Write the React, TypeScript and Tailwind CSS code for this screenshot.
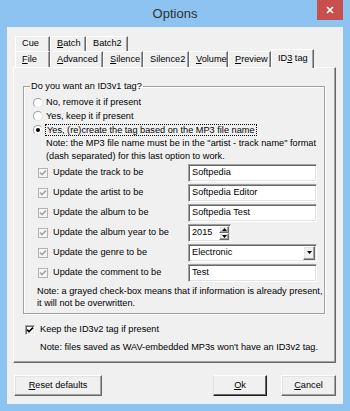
import React from "react";

const sunken =
  "border border-t-[#a0a0a0] border-l-[#a0a0a0] border-b-white border-r-white shadow-[inset_1px_1px_0_#696969,inset_-1px_-1px_0_#e3e3e3]";
const raised =
  "border border-t-white border-l-white border-b-[#696969] border-r-[#696969] shadow-[inset_-1px_-1px_0_#a0a0a0,inset_1px_1px_0_#e3e3e3]";

function Check({ gray }: { gray?: boolean }) {
  return (
    <span
      className={
        gray
          ? "w-[10px] h-[10px] shrink-0 border border-[#b1b1b1] bg-[#f5f5f5] flex items-center justify-center"
          : `w-[10px] h-[10px] shrink-0 bg-white flex items-center justify-center ${sunken}`
      }
    >
      <svg width="8" height="8" viewBox="0 0 8 8">
        <path
          d="M1 3.6 L3 5.6 L7 1.6"
          fill="none"
          stroke={gray ? "#a6a6a6" : "#000"}
          strokeWidth="1.6"
        />
      </svg>
    </span>
  );
}

function Radio({ on }: { on?: boolean }) {
  return (
    <span className="w-[10px] h-[10px] shrink-0 rounded-full bg-white border border-t-[#a0a0a0] border-l-[#a0a0a0] border-b-[#e3e3e3] border-r-[#e3e3e3] flex items-center justify-center">
      {on && <span className="w-[4px] h-[4px] rounded-full bg-black" />}
    </span>
  );
}

function Tab({ className, children }: { className: string; children: React.ReactNode }) {
  return (
    <div
      className={`h-full flex items-center pl-[6px] border-l border-t border-white border-r border-r-[#696969] shadow-[inset_-1px_0_0_#a0a0a0] rounded-tl-[2px] whitespace-nowrap ${className}`}
    >
      {children}
    </div>
  );
}

function Row({ label, children }: { label: string; children: React.ReactNode }) {
  return (
    <div className="h-[18px] flex items-center pl-[14px]">
      <Check gray />
      <span className="ml-[5px] w-[135px] whitespace-nowrap">{label}</span>
      {children}
    </div>
  );
}

function TextBox({ value }: { value: string }) {
  return (
    <div className={`w-[129px] h-[18px] bg-white flex items-center pl-[3px] whitespace-nowrap ${sunken}`}>
      {value}
    </div>
  );
}

function Tri({ down }: { down?: boolean }) {
  return (
    <svg width="5" height="3" viewBox="0 0 5 3">
      <path d={down ? "M0 0 H5 L2.5 3 Z" : "M0 3 H5 L2.5 0 Z"} fill="#000" />
    </svg>
  );
}

export default function App() {
  return (
    <div className="w-[350px] h-[411px] bg-[#8dc3f1] flex flex-col overflow-hidden font-['Liberation_Sans',Arial,sans-serif] text-[9.2px] leading-none text-black">
      {/* title bar */}
      <div className="h-[27px] flex shrink-0">
        <div className="w-[33px]" />
        <div className="flex-1 flex items-center justify-center text-[13px] text-[#303030] pb-[1px]">
          Options
        </div>
        <div className="w-[33px] flex items-start">
          <div className="w-[26px] h-[20px] bg-[#c7504f] flex items-center justify-center">
            <svg width="8" height="8" viewBox="0 0 8 8">
              <path d="M1 1 L7 7 M7 1 L1 7" stroke="#fff" strokeWidth="1.7" />
            </svg>
          </div>
        </div>
      </div>

      {/* client */}
      <div className="mx-[7px] mb-[7px] flex-1 bg-[#f0f0f0] flex flex-col">
        {/* tabs */}
        <div className="pl-[8px] pt-[9px] flex flex-col">
          <div className="h-[15px] flex">
            <Tab className="w-[35px]">Cue</Tab>
            <Tab className="w-[36px]">
              <span><u>B</u>atch</span>
            </Tab>
            <Tab className="w-[42px]">Batch2</Tab>
          </div>
          <div className="h-[16px] flex items-end">
            <Tab className="w-[35px] h-[16px]">
              <span><u>F</u>ile</span>
            </Tab>
            <Tab className="w-[53px] h-[16px]">
              <span><u>A</u>dvanced</span>
            </Tab>
            <Tab className="w-[40px] h-[16px]">
              <span><u>S</u>ilence</span>
            </Tab>
            <Tab className="w-[46px] h-[16px]">Silence2</Tab>
            <Tab className="w-[39px] h-[16px]">
              <span><u>V</u>olume</span>
            </Tab>
            <Tab className="w-[43px] h-[16px]">
              <span><u>P</u>review</span>
            </Tab>
            <div className="w-[43px] h-[19px] -mb-[1px] relative z-10 bg-[#f0f0f0] flex items-start pt-[4px] pl-[6px] border-l border-t border-white border-r border-r-[#696969] shadow-[inset_-1px_0_0_#a0a0a0] rounded-tl-[2px] whitespace-nowrap">
              <span>ID<u>3</u> tag</span>
            </div>
          </div>
        </div>

        {/* panel */}
        <div className="ml-[6px] mr-[7px] h-[296px] border-t border-l border-white border-r border-b border-r-[#696969] border-b-[#696969] shadow-[inset_-1px_-1px_0_#a0a0a0] flex flex-col">
          <fieldset className="mt-[13px] ml-[9px] mr-[10px] border border-[#a0a0a0] shadow-[1px_1px_0_#fff,inset_1px_1px_0_#fff] pt-[4px] pb-[4px] flex flex-col">
            <legend className="ml-[6px] leading-[11px] px-[1px]">Do you want an ID3v1 tag?</legend>
            <div className="h-[13.5px] flex items-center pl-[9px]">
              <Radio />
              <span className="ml-[3px]">No, remove it if present</span>
            </div>
            <div className="h-[13.5px] flex items-center pl-[9px]">
              <Radio />
              <span className="ml-[3px]">Yes, keep it if present</span>
            </div>
            <div className="h-[13.5px] flex items-center pl-[9px]">
              <Radio on />
              <span className="ml-[2px] border border-dotted border-black px-[1px] leading-[10px]">
                Yes, (re)create the tag based on the MP3 file name
              </span>
            </div>
            <div className="pl-[22px] leading-[13px] whitespace-nowrap">
              <div>Note: the MP3 file name must be in the "artist - track name" format</div>
              <div>(dash separated) for this last option to work.</div>
            </div>
            <div className="mt-[1px] flex flex-col gap-[2px]">
              <Row label="Update the track to be">
                <TextBox value="Softpedia" />
              </Row>
              <Row label="Update the artist to be">
                <TextBox value="Softpedia Editor" />
              </Row>
              <Row label="Update the album to be">
                <TextBox value="Softpedia Test" />
              </Row>
              <Row label="Update the album year to be">
                <div className={`w-[43px] h-[18px] bg-white flex items-center ${sunken}`}>
                  <span className="flex-1 pl-[3px]">2015</span>
                  <div className="w-[12px] h-full flex flex-col p-[1px]">
                    <div className={`flex-1 bg-[#f0f0f0] flex items-center justify-center ${raised}`}>
                      <Tri />
                    </div>
                    <div className={`flex-1 bg-[#f0f0f0] flex items-center justify-center ${raised}`}>
                      <Tri down />
                    </div>
                  </div>
                </div>
              </Row>
              <Row label="Update the genre to be">
                <div className={`w-[129px] h-[18px] bg-white flex items-center ${sunken}`}>
                  <span className="flex-1 pl-[3px]">Electronic</span>
                  <div className="w-[14px] h-full p-[1px]">
                    <div className={`h-full bg-[#f0f0f0] flex items-center justify-center ${raised}`}>
                      <Tri down />
                    </div>
                  </div>
                </div>
              </Row>
              <Row label="Update the comment to be">
                <TextBox value="Test" />
              </Row>
            </div>
            <div className="mt-[3px] pl-[13px] leading-[12px] whitespace-nowrap">
              <div>Note: a grayed check-box means that if information is already present,</div>
              <div>it will not be overwritten.</div>
            </div>
          </fieldset>

          <div className="mt-[10px] ml-[11px] h-[12px] flex items-center">
            <Check />
            <span className="ml-[5px]">Keep the ID3v2 tag if present</span>
          </div>
          <div className="mt-[5px] ml-[26px] leading-[12px] whitespace-nowrap">
            Note: files saved as WAV-embedded MP3s won't have an ID3v2 tag.
          </div>
        </div>

        {/* buttons */}
        <div className="mt-[12px] px-[7px] flex items-center">
          <div className={`w-[88px] h-[21px] flex items-center justify-center bg-[#f0f0f0] ${raised}`}>
            <span><u>R</u>eset defaults</span>
          </div>
          <div className="flex-1" />
          <div className="w-[54px] h-[21px] flex items-center justify-center bg-[#f0f0f0] border border-t-white border-l-[#e3e3e3] border-b-[#1e1e1e] border-r-[#1e1e1e] shadow-[inset_-1px_-1px_0_#696969]">
            <span><u>O</u>k</span>
          </div>
          <div className={`ml-[14px] w-[55px] h-[21px] flex items-center justify-center bg-[#f0f0f0] ${raised}`}>
            <span><u>C</u>ancel</span>
          </div>
        </div>
      </div>
    </div>
  );
}
